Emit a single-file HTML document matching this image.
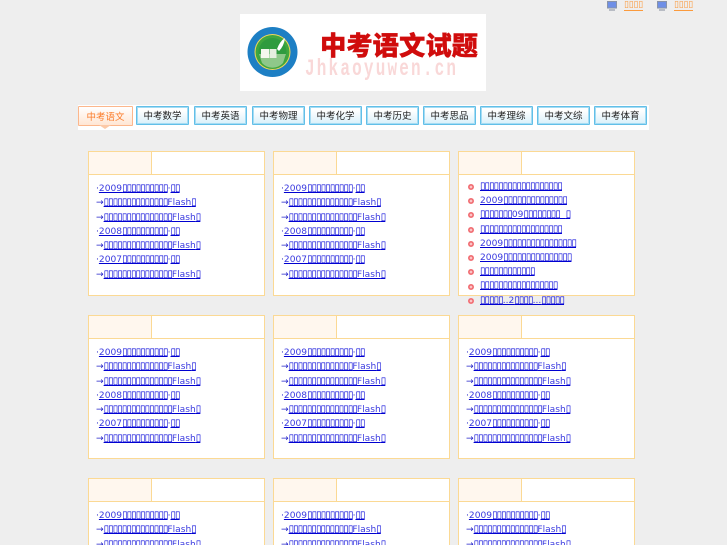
<!DOCTYPE html>
<html lang="zh">
<head>
<meta charset="utf-8">
<title>中考语文试题</title>
<style>
html,body{margin:0;padding:0;width:727px;height:545px;overflow:hidden;background:#eeeeee}
#wrap{position:relative;width:727px;height:545px;overflow:hidden;background:#eeeeee;font-family:"DejaVu Sans","Noto Sans CJK SC",sans-serif}
.abs{position:absolute}
.top{position:absolute;top:1px;height:9px;font:700 9px/9px "DejaVu Sans",sans-serif;letter-spacing:-.2px;color:#fb9a3c;border-bottom:1px solid #fb9a3c;white-space:nowrap}
.logo{position:absolute;left:240px;top:14px;width:246px;height:77px;background:#fff}
.strip{position:absolute;left:78px;top:105px;width:571px;height:25px;background:#fff}
.tab{position:absolute;top:106px;height:17px;border:1px solid #62bfe8;box-shadow:inset 0 0 0 1px #a5dcf3;background:linear-gradient(#fff 20%,#d9f0fa);border-radius:1px;font:9.5px/17px "Noto Sans CJK SC",sans-serif;color:#222;text-align:center;box-sizing:content-box}
.tab.on{border-color:#fcb78c;box-shadow:none;background:linear-gradient(#fff,#ffe6d4);color:#fb7d2c;height:18px;top:106px;line-height:18px}
.arrow{position:absolute;left:99px;top:125px;width:0;height:0;border:6px solid transparent;border-top:4px solid #fcc9a7;border-bottom:0}
.box{position:absolute;width:175px;background:#fff;border:1px solid #fbd994;overflow:visible}
.box.cut{height:66px;border-bottom:0;overflow:hidden}
.head{position:absolute;left:0;top:0;right:0;height:22px;border-bottom:1px solid #fbd994}
.cell{position:absolute;left:0;top:0;width:62px;height:22px;background:#fff7ee;border-right:1px solid #fbd994}
.list{position:absolute;left:7px;top:30px;font-size:9.1px;line-height:14.25px;white-space:nowrap;color:#2020c8}
.list a,.side a{color:#3a3ae0;text-decoration:underline;text-decoration-thickness:1px;text-decoration-color:#0000d0;text-decoration-skip-ink:none}
.b{font-size:10px;letter-spacing:-.95px;color:#0000d8;font-family:"DejaVu Sans",sans-serif;font-weight:700}
.side{position:absolute;left:21px;top:28px;font-size:9.1px;line-height:14.2px;white-space:nowrap}
.dot{position:absolute;left:9px;width:6px;height:6px;border-radius:50%;background:radial-gradient(circle,#fbc4c6 0 25%,#ee5a60 45%);box-shadow:inset 0 0 0 .5px #f59a9d}
</style>
</head>
<body>
<div id="wrap">
<svg class="abs" style="left:606px;top:0" width="12" height="12" viewBox="0 0 12 12"><rect x="1.500" y="1.500" width="9" height="6.500" fill="#6f8fe6" stroke="#8a94a8"/><rect x="3" y="9" width="6" height="2" fill="#b8bcc4"/></svg>
<div class="top" style="left:624px">▯▯▯▯</div>
<svg class="abs" style="left:656px;top:0" width="12" height="12" viewBox="0 0 12 12"><rect x="1.500" y="1.500" width="9" height="6.500" fill="#6f8fe6" stroke="#8a94a8"/><rect x="3" y="9" width="6" height="2" fill="#b8bcc4"/></svg>
<div class="top" style="left:674px">▯▯▯▯</div>

<div class="logo">
<svg width="246" height="77" viewBox="0 0 246 77">
<circle cx="32.500" cy="38" r="25" fill="#1d7fc4"/>
<circle cx="32.500" cy="38" r="18" fill="#f1d75a"/>
<circle cx="32.500" cy="38" r="17" fill="#3fa63f"/>
<circle cx="32.500" cy="38" r="14" fill="#2f9b3f"/>
<path d="M19 40h27l-3 9a14 14 0 0 1-21 0z" fill="#8fc88a"/>
<path d="M37 35q3-8 8-11q-1 8-6 13z" fill="#fff"/>
<rect x="21" y="35" width="8" height="9" fill="#f4f7ee"/><rect x="29.500" y="35" width="7" height="9" fill="#e6efe0"/>
<text x="80" y="41" font-family="Noto Sans CJK SC,sans-serif" font-size="26" font-weight="900" fill="#d00c0c" stroke="#d00c0c" stroke-width=".4" textLength="158" lengthAdjust="spacingAndGlyphs">中考语文试题</text>
<g transform="translate(65 61) scale(1 1.45)"><text x="0" y="0" font-family="Liberation Mono,monospace" font-size="16" font-weight="700" fill="#f9d8d8" textLength="151" lengthAdjust="spacing">Jhkaoyuwen.cn</text></g>
</svg>
</div>

<div class="strip"></div>
<div class="tab on" style="left:78px;width:53px">中考语文</div>
<div class="arrow"></div>
<div class="tab" style="left:136px;width:51px">中考数学</div>
<div class="tab" style="left:194px;width:51px">中考英语</div>
<div class="tab" style="left:252px;width:51px">中考物理</div>
<div class="tab" style="left:309px;width:51px">中考化学</div>
<div class="tab" style="left:366px;width:51px">中考历史</div>
<div class="tab" style="left:423px;width:51px">中考思品</div>
<div class="tab" style="left:480px;width:51px">中考理综</div>
<div class="tab" style="left:537px;width:51px">中考文综</div>
<div class="tab" style="left:594px;width:51px">中考体育</div>

<div class="box" style="left:88px;top:151px;height:143px"><div class="head"><div class="cell"></div></div>
<div class="list">·<a>2009<span class="b">▯▯▯▯▯▯▯▯▯▯</span></a>·<a><span class="b">▯▯</span></a><br>→<a><span class="b">▯▯▯▯▯▯▯▯▯▯▯▯▯▯</span>Flash<span class="b">▯</span></a><br>→<a><span class="b">▯▯▯▯▯▯▯▯▯▯▯▯▯▯▯</span>Flash<span class="b">▯</span></a><br>·<a>2008<span class="b">▯▯▯▯▯▯▯▯▯▯</span></a>·<a><span class="b">▯▯</span></a><br>→<a><span class="b">▯▯▯▯▯▯▯▯▯▯▯▯▯▯▯</span>Flash<span class="b">▯</span></a><br>·<a>2007<span class="b">▯▯▯▯▯▯▯▯▯▯</span></a>·<a><span class="b">▯▯</span></a><br>→<a><span class="b">▯▯▯▯▯▯▯▯▯▯▯▯▯▯▯</span>Flash<span class="b">▯</span></a></div></div>

<div class="box" style="left:273px;top:151px;height:143px"><div class="head"><div class="cell"></div></div>
<div class="list">·<a>2009<span class="b">▯▯▯▯▯▯▯▯▯▯</span></a>·<a><span class="b">▯▯</span></a><br>→<a><span class="b">▯▯▯▯▯▯▯▯▯▯▯▯▯▯</span>Flash<span class="b">▯</span></a><br>→<a><span class="b">▯▯▯▯▯▯▯▯▯▯▯▯▯▯▯</span>Flash<span class="b">▯</span></a><br>·<a>2008<span class="b">▯▯▯▯▯▯▯▯▯▯</span></a>·<a><span class="b">▯▯</span></a><br>→<a><span class="b">▯▯▯▯▯▯▯▯▯▯▯▯▯▯▯</span>Flash<span class="b">▯</span></a><br>·<a>2007<span class="b">▯▯▯▯▯▯▯▯▯▯</span></a>·<a><span class="b">▯▯</span></a><br>→<a><span class="b">▯▯▯▯▯▯▯▯▯▯▯▯▯▯▯</span>Flash<span class="b">▯</span></a></div></div>

<div class="box" style="left:458px;top:151px;height:143px"><div class="head"><div class="cell"></div></div>
<i class="dot" style="top:32px"></i><i class="dot" style="top:46px"></i><i class="dot" style="top:60px"></i><i class="dot" style="top:75px"></i><i class="dot" style="top:89px"></i><i class="dot" style="top:103px"></i><i class="dot" style="top:117px"></i><i class="dot" style="top:132px"></i><i class="dot" style="top:146px"></i>
<div class="side"><a><span class="b">▯▯▯▯▯▯▯▯▯▯▯▯▯▯▯▯▯▯</span></a><br><a>2009<span class="b">▯▯▯▯▯▯▯▯▯▯▯▯▯▯</span></a><br><a><span class="b">▯▯▯▯▯▯▯</span>09<span class="b">▯▯▯▯▯▯▯▯</span>&nbsp;&nbsp;<span class="b">▯</span></a><br><a><span class="b">▯▯▯▯▯▯▯▯▯▯▯▯▯▯▯▯▯▯</span></a><br><a>2009<span class="b">▯▯▯▯▯▯▯▯▯▯▯▯▯▯▯▯</span></a><br><a>2009<span class="b">▯▯▯▯▯▯▯▯▯▯▯▯▯▯▯</span></a><br><a><span class="b">▯▯▯▯▯▯▯▯▯▯▯▯</span></a><br><a><span class="b">▯▯▯▯▯▯▯▯▯▯▯▯▯▯▯▯▯</span></a><br><a><span class="b">▯▯▯▯▯</span>..2<span class="b">▯▯▯▯</span>...<span class="b">▯▯▯▯▯</span></a></div></div>

<div class="box" style="left:88px;top:315px;height:142px"><div class="head"><div class="cell"></div></div>
<div class="list">·<a>2009<span class="b">▯▯▯▯▯▯▯▯▯▯</span></a>·<a><span class="b">▯▯</span></a><br>→<a><span class="b">▯▯▯▯▯▯▯▯▯▯▯▯▯▯</span>Flash<span class="b">▯</span></a><br>→<a><span class="b">▯▯▯▯▯▯▯▯▯▯▯▯▯▯▯</span>Flash<span class="b">▯</span></a><br>·<a>2008<span class="b">▯▯▯▯▯▯▯▯▯▯</span></a>·<a><span class="b">▯▯</span></a><br>→<a><span class="b">▯▯▯▯▯▯▯▯▯▯▯▯▯▯▯</span>Flash<span class="b">▯</span></a><br>·<a>2007<span class="b">▯▯▯▯▯▯▯▯▯▯</span></a>·<a><span class="b">▯▯</span></a><br>→<a><span class="b">▯▯▯▯▯▯▯▯▯▯▯▯▯▯▯</span>Flash<span class="b">▯</span></a></div></div>

<div class="box" style="left:273px;top:315px;height:142px"><div class="head"><div class="cell"></div></div>
<div class="list">·<a>2009<span class="b">▯▯▯▯▯▯▯▯▯▯</span></a>·<a><span class="b">▯▯</span></a><br>→<a><span class="b">▯▯▯▯▯▯▯▯▯▯▯▯▯▯</span>Flash<span class="b">▯</span></a><br>→<a><span class="b">▯▯▯▯▯▯▯▯▯▯▯▯▯▯▯</span>Flash<span class="b">▯</span></a><br>·<a>2008<span class="b">▯▯▯▯▯▯▯▯▯▯</span></a>·<a><span class="b">▯▯</span></a><br>→<a><span class="b">▯▯▯▯▯▯▯▯▯▯▯▯▯▯▯</span>Flash<span class="b">▯</span></a><br>·<a>2007<span class="b">▯▯▯▯▯▯▯▯▯▯</span></a>·<a><span class="b">▯▯</span></a><br>→<a><span class="b">▯▯▯▯▯▯▯▯▯▯▯▯▯▯▯</span>Flash<span class="b">▯</span></a></div></div>

<div class="box" style="left:458px;top:315px;height:142px"><div class="head"><div class="cell"></div></div>
<div class="list">·<a>2009<span class="b">▯▯▯▯▯▯▯▯▯▯</span></a>·<a><span class="b">▯▯</span></a><br>→<a><span class="b">▯▯▯▯▯▯▯▯▯▯▯▯▯▯</span>Flash<span class="b">▯</span></a><br>→<a><span class="b">▯▯▯▯▯▯▯▯▯▯▯▯▯▯▯</span>Flash<span class="b">▯</span></a><br>·<a>2008<span class="b">▯▯▯▯▯▯▯▯▯▯</span></a>·<a><span class="b">▯▯</span></a><br>→<a><span class="b">▯▯▯▯▯▯▯▯▯▯▯▯▯▯▯</span>Flash<span class="b">▯</span></a><br>·<a>2007<span class="b">▯▯▯▯▯▯▯▯▯▯</span></a>·<a><span class="b">▯▯</span></a><br>→<a><span class="b">▯▯▯▯▯▯▯▯▯▯▯▯▯▯▯</span>Flash<span class="b">▯</span></a></div></div>

<div class="box cut" style="left:88px;top:478px"><div class="head"><div class="cell"></div></div>
<div class="list">·<a>2009<span class="b">▯▯▯▯▯▯▯▯▯▯</span></a>·<a><span class="b">▯▯</span></a><br>→<a><span class="b">▯▯▯▯▯▯▯▯▯▯▯▯▯▯</span>Flash<span class="b">▯</span></a><br>→<a><span class="b">▯▯▯▯▯▯▯▯▯▯▯▯▯▯▯</span>Flash<span class="b">▯</span></a></div></div>

<div class="box cut" style="left:273px;top:478px"><div class="head"><div class="cell"></div></div>
<div class="list">·<a>2009<span class="b">▯▯▯▯▯▯▯▯▯▯</span></a>·<a><span class="b">▯▯</span></a><br>→<a><span class="b">▯▯▯▯▯▯▯▯▯▯▯▯▯▯</span>Flash<span class="b">▯</span></a><br>→<a><span class="b">▯▯▯▯▯▯▯▯▯▯▯▯▯▯▯</span>Flash<span class="b">▯</span></a></div></div>

<div class="box cut" style="left:458px;top:478px"><div class="head"><div class="cell"></div></div>
<div class="list">·<a>2009<span class="b">▯▯▯▯▯▯▯▯▯▯</span></a>·<a><span class="b">▯▯</span></a><br>→<a><span class="b">▯▯▯▯▯▯▯▯▯▯▯▯▯▯</span>Flash<span class="b">▯</span></a><br>→<a><span class="b">▯▯▯▯▯▯▯▯▯▯▯▯▯▯▯</span>Flash<span class="b">▯</span></a></div></div>
</div>
</body>
</html>
